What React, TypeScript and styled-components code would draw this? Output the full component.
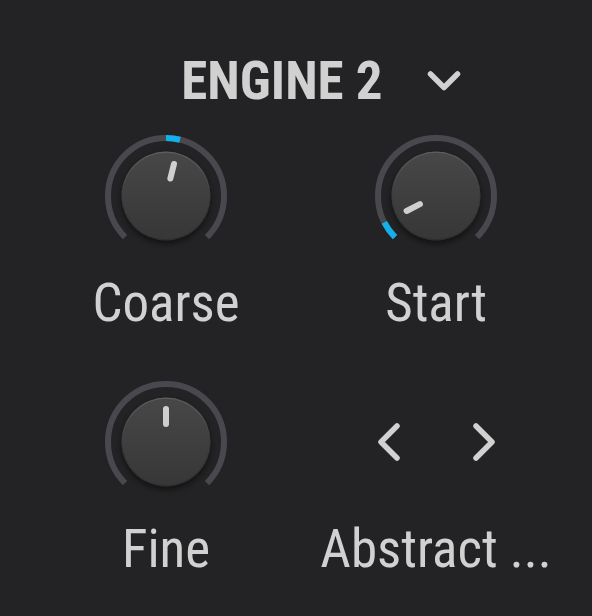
import React from "react";
import styled, { createGlobalStyle } from "styled-components";

const GlobalStyle = createGlobalStyle`
  html, body {
    margin: 0;
    padding: 0;
    background: #232325;
  }
`;

const Panel = styled.div`
  width: 592px;
  height: 616px;
  box-sizing: border-box;
  padding: 55px 21px 0 31px;
  background: #232325;
  font-family: "Roboto Condensed", "Roboto", sans-serif;
  font-stretch: 77%;
  color: #d1d1d1;
`;

const Header = styled.div`
  display: flex;
  align-items: center;
  justify-content: center;
  gap: 44px;
  padding-left: 40px;
  height: 52px;
`;

const Title = styled.div`
  font-size: 53px;
  line-height: 52px;
  font-weight: 700;
`;

const Grid = styled.div`
  display: grid;
  grid-template-columns: 270px 270px;
  row-gap: 48px;
  margin-top: 24px;
`;

const Cell = styled.div`
  display: flex;
  flex-direction: column;
  align-items: center;
  gap: 16px;
`;

const Label = styled.div`
  font-size: 53px;
  line-height: 52px;
  font-weight: 400;
  white-space: nowrap;
`;

const Arrows = styled.div`
  width: 130px;
  height: 130px;
  display: flex;
  align-items: center;
  justify-content: center;
  gap: 73px;
`;

const CX = 65;
const CY = 65;
const RING_R = 58;

const polar = (r: number, deg: number) => {
  const a = ((deg - 90) * Math.PI) / 180;
  return [CX + r * Math.cos(a), CY + r * Math.sin(a)];
};

const arc = (r: number, from: number, to: number) => {
  const [x1, y1] = polar(r, from);
  const [x2, y2] = polar(r, to);
  const large = Math.abs(to - from) > 180 ? 1 : 0;
  const sweep = to > from ? 1 : 0;
  return `M ${x1} ${y1} A ${r} ${r} 0 ${large} ${sweep} ${x2} ${y2}`;
};

interface KnobProps {
  angle: number;
  bipolar?: boolean;
  id: string;
}

const Knob: React.FC<KnobProps> = ({ angle, bipolar, id }) => {
  const start = bipolar ? 0 : -135;
  const [ix1, iy1] = polar(18, angle);
  const [ix2, iy2] = polar(33, angle);
  return (
    <svg width="130" height="130" viewBox="0 0 130 130">
      <defs>
        <linearGradient id={`body-${id}`} x1="0" y1="0" x2="0" y2="1">
          <stop offset="0" stopColor="#474747" />
          <stop offset="1" stopColor="#373737" />
        </linearGradient>
        <linearGradient id={`rim-${id}`} x1="0" y1="0" x2="0" y2="1">
          <stop offset="0" stopColor="#5e5e5e" />
          <stop offset="0.5" stopColor="#3c3c3c" />
          <stop offset="1" stopColor="#2e2e2e" />
        </linearGradient>
        <filter id={`shadow-${id}`} x="-30%" y="-30%" width="160%" height="170%">
          <feDropShadow dx="0" dy="3" stdDeviation="3" floodColor="#000" floodOpacity="0.55" />
        </filter>
      </defs>
      <path d={arc(RING_R, -135, 135)} stroke="#48484e" strokeWidth="6" fill="none" />
      {Math.abs(angle - start) > 0.5 && (
        <path
          d={angle > start ? arc(RING_R, start, angle) : arc(RING_R, angle, start)}
          stroke="#13b0ec"
          strokeWidth="6"
          fill="none"
        />
      )}
      <circle cx={CX} cy={CY} r="44.5" fill={`url(#rim-${id})`} filter={`url(#shadow-${id})`} />
      <circle cx={CX} cy={CY} r="43.2" fill={`url(#body-${id})`} />
      <line x1={ix1} y1={iy1} x2={ix2} y2={iy2} stroke="#cfcfcf" strokeWidth="6" strokeLinecap="round" />
    </svg>
  );
};

const Chevron = ({ d, w, h }: { d: string; w: number; h: number }) => (
  <svg width={w} height={h} viewBox={`0 0 ${w} ${h}`}>
    <path d={d} stroke="#d1d1d1" strokeWidth="5.5" fill="none" strokeLinecap="round" strokeLinejoin="round" />
  </svg>
);

export default function App() {
  return (
    <>
      <GlobalStyle />
      <Panel>
        <Header>
          <Title>ENGINE 2</Title>
          <Chevron w={34} h={22} d="M3.5 4 L17 17.5 L30.5 4" />
        </Header>
        <Grid>
          <Cell>
            <Knob id="coarse" angle={14} bipolar />
            <Label>Coarse</Label>
          </Cell>
          <Cell>
            <Knob id="start" angle={-117} />
            <Label>Start</Label>
          </Cell>
          <Cell>
            <Knob id="fine" angle={0} bipolar />
            <Label>Fine</Label>
          </Cell>
          <Cell>
            <Arrows>
              <Chevron w={22} h={38} d="M19 3 L3 19 L19 35" />
              <Chevron w={22} h={38} d="M3 3 L19 19 L3 35" />
            </Arrows>
            <Label>Abstract ...</Label>
          </Cell>
        </Grid>
      </Panel>
    </>
  );
}
